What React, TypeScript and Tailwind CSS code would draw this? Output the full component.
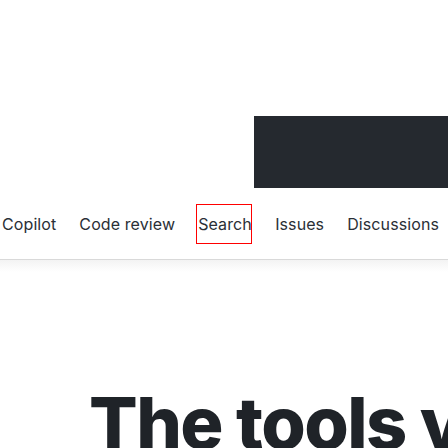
import React from "react";

export default function App() {
  const items = ["Copilot", "Code review", "Search", "Issues", "Discussions"];
  return (
    <div className="w-[448px] h-[448px] overflow-hidden bg-white relative" style={{ fontFamily: "Inter, 'Noto Sans', sans-serif" }}>
      <div className="h-[116px]" />
      <div className="flex justify-end">
        <div className="w-[194px] h-[72px] bg-[#25292f]" />
      </div>
      <div className="h-[72px] border-b border-[#d9d9d9] flex items-center relative">
        <div className="flex items-center whitespace-nowrap text-[16px] text-[#2a2f36] pl-[2px] gap-[23px] tracking-[0.1px]">
          {items.map((t) => (
            <div key={t} className={t === "Search" ? "relative h-[40px] w-[56px] flex items-center border border-[#ff0000] -ml-[2px] pl-[1px]" : ""}>
              {t}
            </div>
          ))}
        </div>
      </div>
      <div className="h-[12px] bg-gradient-to-b from-[#f3f3f3] to-white" />
      <div className="pl-[89px] pt-[115px] text-[72px] font-extrabold leading-none text-[#1f2328] tracking-[-1.6px] whitespace-nowrap">
        The tools you
      </div>
    </div>
  );
}
